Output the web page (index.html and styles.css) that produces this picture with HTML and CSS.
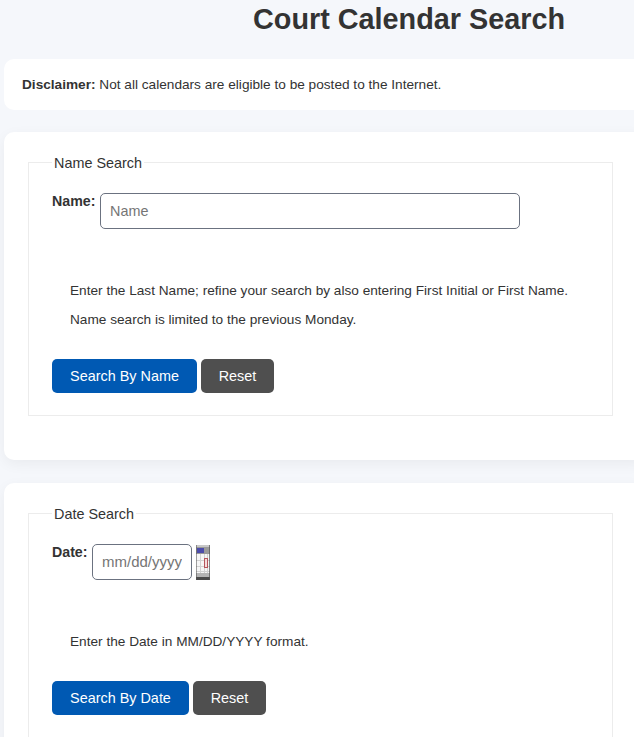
FILE: index.html
```html
<!DOCTYPE html>
<html lang="en">
<head>
<meta charset="utf-8">
<title>Court Calendar Search</title>
<link rel="stylesheet" href="styles.css">
</head>
<body>
<main class="page">
  <h1 class="title">Court Calendar Search</h1>
  <div class="card disclaimer"><strong>Disclaimer:</strong> Not all calendars are eligible to be posted to the Internet.</div>
  <section class="card search-card name-card">
    <fieldset class="group">
      <legend>Name Search</legend>
      <div class="field">
        <label class="field-label name-label" for="name">Name:</label>
        <input class="text-input name-input" id="name" type="text" placeholder="Name">
      </div>
      <div class="help">
        <p>Enter the Last Name; refine your search by also entering First Initial or First Name.</p>
        <p>Name search is limited to the previous Monday.</p>
      </div>
      <div class="actions">
        <button class="btn primary name-btn" type="button">Search By Name</button>
        <button class="btn secondary" type="button">Reset</button>
      </div>
    </fieldset>
  </section>
  <section class="card search-card">
    <fieldset class="group">
      <legend>Date Search</legend>
      <div class="field">
        <label class="field-label date-label" for="date">Date:</label>
        <input class="text-input date-input" id="date" type="text" placeholder="mm/dd/yyyy">
        <svg class="cal" viewBox="0 0 14 35" width="14" height="35" aria-hidden="true">
          <rect width="14" height="35" fill="#ececec"/>
          <rect width="14" height="2" fill="#c8c8c8"/>
          <rect y="2" width="14" height="7" fill="#9a9a9a"/>
          <rect x="1" y="3" width="7" height="5" fill="#4c4cab"/>
          <rect x="0" y="9" width="14" height="19" fill="#f6f6f6"/>
          <g fill="#d2d2d2">
            <rect x="0" y="15" width="14" height="1"/>
            <rect x="0" y="21" width="14" height="1"/>
            <rect x="0" y="26" width="14" height="1"/>
            <rect x="4" y="9" width="1" height="20"/>
            <rect x="8" y="9" width="1" height="20"/>
            <rect x="11" y="9" width="1" height="20"/>
          </g>
          <rect x="8.5" y="13.5" width="3" height="9" fill="#f3dcdc" stroke="#b5555c"/>
          <rect y="28" width="14" height="4" fill="#b4b4b4"/>
          <rect y="32" width="14" height="3" fill="#4a4a4a"/>
          <rect width="1" height="35" fill="#555" opacity=".55"/>
          <rect x="13" width="1" height="35" fill="#555" opacity=".7"/>
        </svg>
      </div>
      <div class="help">
        <p>Enter the Date in MM/DD/YYYY format.</p>
      </div>
      <div class="actions">
        <button class="btn primary date-btn" type="button">Search By Date</button>
        <button class="btn secondary" type="button">Reset</button>
      </div>
    </fieldset>
  </section>
</main>
</body>
</html>
```
FILE: styles.css
```css
* { box-sizing: border-box; }
html, body { margin: 0; height: 737px; overflow: hidden; }
body {
  background: #f5f7fb;
  color: #333;
  font-family: "Liberation Sans", Arial, sans-serif;
  font-size: 13.65px;
}
.page { width: 634px; padding-left: 4px; }
.title {
  margin: 0;
  padding: 2px 0 0 249px;
  height: 59px;
  font-size: 28.8px;
  line-height: 34px;
  font-weight: 700;
  white-space: nowrap;
  color: #333;
}
.card {
  background: #fff;
  border-radius: 10px 0 0 10px;
  width: 640px;
}
.disclaimer {
  height: 51px;
  padding: 0 18px;
  line-height: 51px;
  margin-bottom: 22px;
}
.search-card {
  padding: 22px 0 0 24px;
  box-shadow: 0 4px 14px rgba(0, 0, 0, .05);
}
.name-card { height: 328px; margin-bottom: 23px; }
.search-card:last-child { height: 300px; border-bottom-left-radius: 0; }
.group {
  margin: 0;
  width: 585px;
  padding: 0 23px 22px;
  border: 1px solid #ececec;
  min-inline-size: 0;
}
.group legend {
  padding: 2px 2px 0;
  font-size: 14.4px;
  line-height: 1;
  color: #333;
}
.field {
  display: flex;
  align-items: flex-start;
  margin-top: 23px;
}
.field-label { font-weight: 700; font-size: 14.2px; line-height: 16px; }
.name-label { width: 48px; }
.date-label { width: 40px; }
.text-input {
  height: 36px;
  padding: 0 9px;
  border: 1px solid #6b7280;
  border-radius: 5px;
  background: #fff;
  font: 14.4px "Liberation Sans", Arial, sans-serif;
}
.text-input::placeholder { color: #757575; opacity: 1; }
.name-input { width: 420px; }
.date-input { width: 100px; font-size: 15px; padding-bottom: 1px; }
.cal { display: block; margin: 1px 0 0 4px; }
.help { padding: 47px 0 0 18px; }
.help p { margin: 0; line-height: 29px; height: 29px; }
.actions { display: flex; gap: 4px; margin-top: 25px; }
.btn {
  height: 34px;
  padding: 0;
  border: 0;
  border-radius: 5px;
  color: #fff;
  font: 14.4px "Liberation Sans", Arial, sans-serif;
}
.primary { background: #0059b3; }
.secondary { background: #4f4f4f; width: 73px; }
.name-btn { width: 145px; }
.date-btn { width: 137px; }
```
